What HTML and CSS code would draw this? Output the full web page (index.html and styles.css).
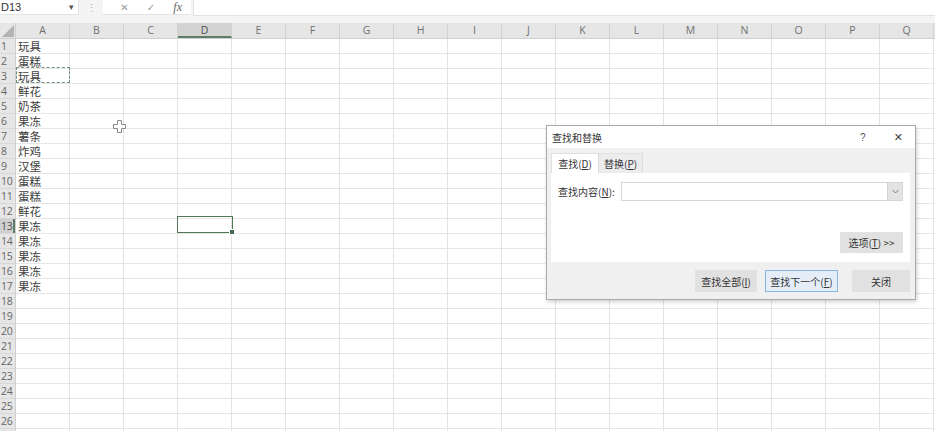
FILE: index.html
```html
<!DOCTYPE html>
<html lang="zh">
<head>
<meta charset="utf-8">
<link rel="stylesheet" href="styles.css">
</head>
<body>
<div class="app">
  <div class="fbar">
    <div class="namebox"><span>D13</span><span class="caret">▾</span></div>
    <div class="grip">⋮</div>
    <div class="fxbtns"><span class="fxi">✕</span><span class="fxi">✓</span><span class="fxi fx">fx</span></div>
    <div class="finput"></div>
  </div>
  <div class="colhead">
    <div class="corner"><svg width="12" height="12" viewBox="0 0 12 12"><polygon points="12,0 12,12 0,12" fill="#b3b3b3"/></svg></div>
    <div class="ch">A</div><div class="ch">B</div><div class="ch">C</div><div class="ch sel">D</div><div class="ch">E</div><div class="ch">F</div><div class="ch">G</div><div class="ch">H</div><div class="ch">I</div><div class="ch">J</div><div class="ch">K</div><div class="ch">L</div><div class="ch">M</div><div class="ch">N</div><div class="ch">O</div><div class="ch">P</div><div class="ch">Q</div>
  </div>
  <div class="sheet">
    <div class="rowheads">
      <div class="rh">1</div><div class="rh">2</div><div class="rh">3</div><div class="rh">4</div><div class="rh">5</div><div class="rh">6</div><div class="rh">7</div><div class="rh">8</div><div class="rh">9</div><div class="rh">10</div><div class="rh">11</div><div class="rh">12</div><div class="rh sel">13</div><div class="rh">14</div><div class="rh">15</div><div class="rh">16</div><div class="rh">17</div><div class="rh">18</div><div class="rh">19</div><div class="rh">20</div><div class="rh">21</div><div class="rh">22</div><div class="rh">23</div><div class="rh">24</div><div class="rh">25</div><div class="rh">26</div><div class="rh"></div>
    </div>
    <div class="cells">
      <div class="cell">玩具</div>
      <div class="cell">蛋糕</div>
      <div class="cell">玩具</div>
      <div class="cell">鲜花</div>
      <div class="cell">奶茶</div>
      <div class="cell">果冻</div>
      <div class="cell">薯条</div>
      <div class="cell">炸鸡</div>
      <div class="cell">汉堡</div>
      <div class="cell">蛋糕</div>
      <div class="cell">蛋糕</div>
      <div class="cell">鲜花</div>
      <div class="cell">果冻</div>
      <div class="cell">果冻</div>
      <div class="cell">果冻</div>
      <div class="cell">果冻</div>
      <div class="cell">果冻</div>
    </div>
  </div>

  <div class="marquee"></div>
  <div class="selcell"><span class="handle"></span></div>
  <svg class="cursor" width="13" height="13" viewBox="0 0 13 13"><path d="M4.5 0.5h4v4h4v4h-4v4h-4v-4h-4v-4h4z" fill="#fff" stroke="#8a8a8a" stroke-width="1"/></svg>

  <div class="dialog">
    <div class="dtitle">
      <span class="dname">查找和替换</span>
      <span class="dhelp">?</span>
      <span class="dclose">✕</span>
    </div>
    <div class="dbody">
      <div class="tabs">
        <div class="tab active">查找(<u>D</u>)</div>
        <div class="tab">替换(<u>P</u>)</div>
      </div>
      <div class="panel">
        <div class="findrow">
          <span class="flabel">查找内容(<u>N</u>):</span>
          <div class="combo"><span class="caretbox"><svg width="7" height="5" viewBox="0 0 7 5"><path d="M0.5 1l3 3 3-3" fill="none" stroke="#777" stroke-width="1"/></svg></span></div>
        </div>
        <div class="optrow"><div class="btn opt">选项(<u>T</u>) &gt;&gt;</div></div>
      </div>
      <div class="btnrow">
        <div class="btn b1">查找全部(<u>I</u>)</div>
        <div class="btn b2 focus">查找下一个(<u>F</u>)</div>
        <div class="btn b3">关闭</div>
      </div>
    </div>
  </div>
</div>
</body>
</html>
```
FILE: styles.css
```css
html, body {
  margin: 0;
  padding: 0;
  background: #fff;
}
body {
  width: 935px;
  height: 431px;
  overflow: hidden;
  font-family: "Noto Sans CJK SC", "Liberation Sans", sans-serif;
}
.app {
  position: relative;
  width: 935px;
  height: 431px;
  overflow: hidden;
}
.fbar {
  height: 23px;
  background: #f4f4f4;
  display: flex;
  align-items: flex-start;
  box-sizing: border-box;
}
.namebox {
  width: 79px;
  height: 15px;
  background: #fff;
  border-right: 1px solid #e2e2e2;
  border-bottom: 1px solid #e2e2e2;
  display: flex;
  align-items: center;
  justify-content: space-between;
  font-family: "Liberation Sans", sans-serif;
  font-size: 11px;
  color: #333;
  padding: 0 4px 0 1px;
  box-sizing: border-box;
}
.caret {
  font-size: 9px;
  color: #555;
}
.grip {
  width: 24px;
  height: 15px;
  line-height: 14px;
  text-align: center;
  color: #b0b0b0;
  font-size: 11px;
}
.fxbtns {
  width: 88px;
  height: 15px;
  background: #fff;
  display: flex;
  align-items: center;
  padding-left: 8px;
  box-sizing: border-box;
  border-bottom: 1px solid #e2e2e2;
}
.fxi {
  width: 29px;
  text-align: center;
  font-family: "DejaVu Sans", sans-serif;
  font-size: 10px;
  color: #9a9a9a;
}
.fx {
  font-family: "Liberation Serif", serif;
  font-style: italic;
  font-size: 12px;
  color: #666;
}
.finput {
  flex: 1;
  height: 15px;
  margin-left: 2px;
  background: #fff;
  border-bottom: 1px solid #e2e2e2;
  border-left: 1px solid #e2e2e2;
}
.colhead {
  display: flex;
  height: 15px;
  background: #e6e6e6;
  border-bottom: 1px solid #cfcfcf;
}
.corner {
  width: 16px;
  height: 15px;
  display: flex;
  align-items: flex-end;
  justify-content: flex-end;
  box-sizing: border-box;
  border-right: 1px solid #cfcfcf;
  padding: 0 1px 1px 0;
}
.ch {
  width: 54px;
  flex: none;
  height: 15px;
  box-sizing: border-box;
  border-right: 1px solid #d2d2d2;
  text-align: center;
  font-family: "Open Sans", "Liberation Sans", sans-serif;
  font-size: 10.5px;
  line-height: 15px;
  color: #707070;
}
.ch.sel {
  background: #d3d3d3;
  border-bottom: 2px solid #5e7d66;
  line-height: 14px;
  color: #4d4d4d;
}
.sheet {
  display: flex;
  align-items: flex-start;
}
.rowheads {
  width: 16px;
  flex: none;
  background: #e6e6e6;
  border-right: 1px solid #cfcfcf;
  box-sizing: border-box;
}
.rh {
  height: 15px;
  box-sizing: border-box;
  border-bottom: 1px solid #d8d8d8;
  text-align: left;
  padding-left: 1px;
  font-family: "Open Sans", "Liberation Sans", sans-serif;
  font-size: 10.5px;
  line-height: 14px;
  color: #666;
  letter-spacing: -0.3px;
}
.rh.sel {
  background: #d0d0d0;
  color: #4d4d4d;
  box-shadow: inset -2px 0 0 #5e7d66;
}
.cells {
  flex: 1;
  height: 405px;
  background-image:
    linear-gradient(to right, #e3e3e3 1px, transparent 1px),
    linear-gradient(to bottom, #e6e6e6 1px, transparent 1px);
  background-size: 54px 15px, 54px 15px;
  background-position: 53px 0, 0 14px;
}
.cell {
  height: 15px;
  width: 54px;
  padding-left: 2px;
  box-sizing: border-box;
  font-size: 11.5px;
  line-height: 14px;
  color: #404040;
}
.marquee {
  position: absolute;
  left: 16px;
  top: 67px;
  width: 54px;
  height: 16px;
  box-sizing: border-box;
  border: 1px dashed #6f8f77;
}
.selcell {
  position: absolute;
  left: 177px;
  top: 216px;
  width: 56px;
  height: 17px;
  box-sizing: border-box;
  border: 1.5px solid #4f7658;
}
.handle {
  position: absolute;
  right: -3px;
  bottom: -3px;
  width: 4px;
  height: 4px;
  background: #3e6a48;
  border: 1px solid #fff;
}
.cursor {
  position: absolute;
  left: 113px;
  top: 120px;
}
.dialog {
  position: absolute;
  left: 546px;
  top: 125px;
  width: 370px;
  height: 175px;
  box-sizing: border-box;
  border: 1px solid #a9a9a9;
  background: #f0f0f0;
  box-shadow: 1px 2px 4px rgba(0, 0, 0, 0.18);
  display: flex;
  flex-direction: column;
  font-size: 10px;
  color: #333;
}
.dtitle {
  height: 22px;
  background: #fff;
  display: flex;
  align-items: center;
  padding-left: 5px;
  padding-right: 12px;
}
.dname {
  flex: 1;
  font-size: 10px;
  color: #333;
}
.dhelp {
  width: 14px;
  text-align: center;
  font-family: "Liberation Sans", sans-serif;
  font-size: 10px;
  color: #555;
  margin-right: 24px;
}
.dclose {
  font-family: "DejaVu Sans", sans-serif;
  font-size: 11px;
  color: #444;
}
.dbody {
  flex: 1;
  display: flex;
  flex-direction: column;
  padding: 5px 5px 0 4px;
}
.tabs {
  display: flex;
  height: 20px;
}
.tab {
  height: 20px;
  line-height: 19px;
  padding: 0 5px;
  box-sizing: border-box;
  white-space: nowrap;
  font-size: 10px;
  color: #333;
  border-top: 1px solid #e0e0e0;
  border-right: 1px solid #dcdcdc;
  background: #ececec;
}
.tab.active {
  background: #fff;
  width: 48px;
  border-left: 1px solid #e0e0e0;
  text-align: center;
  padding: 0 2px;
}
.tab u, .flabel u, .btn u {
  text-decoration: underline;
}
.panel {
  height: 89px;
  width: 359px;
  background: #fff;
  box-sizing: border-box;
  display: flex;
  flex-direction: column;
  padding: 9px 7px 0 7px;
}
.findrow {
  display: flex;
  align-items: center;
  height: 19px;
}
.flabel {
  width: 63px;
  flex: none;
  white-space: nowrap;
  font-size: 10px;
  color: #333;
}
.combo {
  width: 282px;
  height: 19px;
  box-sizing: border-box;
  border: 1px solid #d6d6d6;
  display: flex;
  justify-content: flex-end;
  align-items: stretch;
}
.caretbox {
  width: 14px;
  background: #e3e3e3;
  border-left: 1px solid #d0d0d0;
  display: flex;
  align-items: center;
  justify-content: center;
}
.optrow {
  display: flex;
  justify-content: flex-end;
  margin-top: 31px;
}
.btn {
  height: 22px;
  box-sizing: border-box;
  background: #e1e1e1;
  border: 1px solid #e1e1e1;
  display: flex;
  align-items: center;
  justify-content: center;
  white-space: nowrap;
  font-size: 10px;
  color: #333;
}
.opt {
  width: 63px;
  height: 21px;
}
.btnrow {
  display: flex;
  justify-content: flex-end;
  margin-top: 8px;
}
.b1 { width: 62px; }
.b2 { width: 73px; margin-left: 8px; }
.b3 { width: 58px; margin-left: 14px; }
.btn.focus {
  border: 1px solid #86b6e4;
  background: #e5eef8;
}
```
